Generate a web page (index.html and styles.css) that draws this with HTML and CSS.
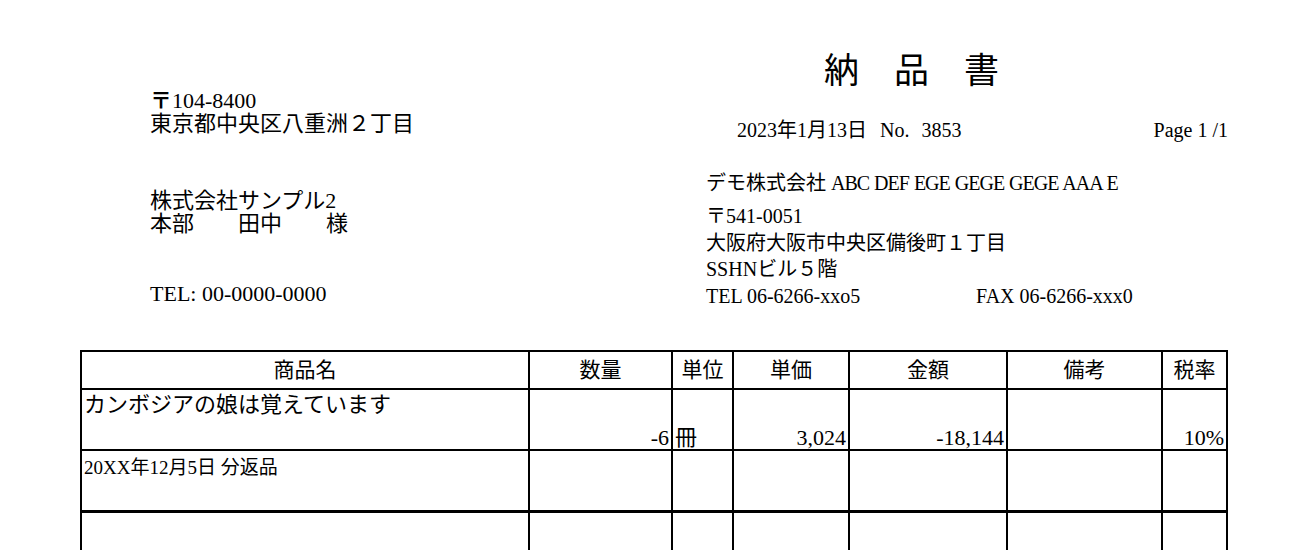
FILE: index.html
```html
<!DOCTYPE html>
<html lang="ja">
<head>
<meta charset="utf-8">
<title>納品書</title>
<link rel="stylesheet" href="styles.css">
</head>
<body>
<div class="sheet">
  <div class="header">
    <div class="customer">
      <div class="line"><span class="postmark">〒</span>104-8400</div>
      <div class="line">東京都中央区八重洲２丁目</div>
      <div class="line gap-name">株式会社サンプル2</div>
      <div class="line">本部　　田中　　様</div>
      <div class="line gap-tel">TEL: 00-0000-0000</div>
    </div>
    <div class="issuer">
      <div class="title">納　品　書</div>
      <div class="meta">
        <span class="date">2023年1月13日</span>
        <span class="no">No.</span>
        <span class="num">3853</span>
        <span class="page">Page 1 /1</span>
      </div>
      <div class="company">デモ株式会社 <span class="latin">ABC DEF EGE GEGE GEGE AAA E</span></div>
      <div class="address">
        <div>〒541-0051</div>
        <div>大阪府大阪市中央区備後町１丁目</div>
        <div>SSHNビル５階</div>
        <div class="contact"><span class="tel">TEL 06-6266-xxo5</span><span>FAX 06-6266-xxx0</span></div>
      </div>
    </div>
  </div>

  <table class="items">
    <colgroup>
      <col class="c-name"><col class="c-qty"><col class="c-unit"><col class="c-price"><col class="c-amount"><col class="c-note"><col class="c-tax">
    </colgroup>
    <thead>
      <tr class="head">
        <th>商品名</th><th>数量</th><th>単位</th><th>単価</th><th>金額</th><th>備考</th><th>税率</th>
      </tr>
    </thead>
    <tbody>
      <tr class="item">
        <td class="name">カンボジアの娘は覚えています</td>
        <td class="numcell">-6</td>
        <td class="unitcell">冊</td>
        <td class="numcell">3,024</td>
        <td class="numcell">-18,144</td>
        <td></td>
        <td class="numcell">10%</td>
      </tr>
      <tr class="detail">
        <td class="name">20XX年12月5日 分返品</td>
        <td></td><td></td><td></td><td></td><td></td><td></td>
      </tr>
      <tr class="blank">
        <td></td><td></td><td></td><td></td><td></td><td></td><td></td>
      </tr>
    </tbody>
  </table>
</div>
</body>
</html>
```

FILE: styles.css
```css
html, body {
  margin: 0;
  padding: 0;
  background: #ffffff;
}

body {
  font-family: "Liberation Serif", "Noto Sans CJK JP", serif;
  color: #000000;
  overflow: hidden;
}

.sheet {
  padding: 50px 0 0 80px;
}

.header {
  display: grid;
  grid-template-columns: 556px 522px;
  margin-left: 70px;
}

.customer {
  padding-top: 39px;
  font-size: 22px;
}

.customer .line {
  line-height: 23px;
}

.postmark {
  font-weight: bold;
}

.customer .gap-name {
  margin-top: 55px;
  line-height: 22px;
}

.customer .gap-tel {
  margin-top: 47px;
}

.issuer {
  font-size: 20px;
}

.title {
  font-size: 35px;
  line-height: 44px;
  padding-left: 118px;
}

.meta {
  display: flex;
  align-items: baseline;
  margin-top: 25px;
  line-height: 22px;
}

.meta .date {
  margin-left: 31px;
  width: 143px;
}

.meta .num {
  margin-left: 12px;
}

.meta .page {
  margin-left: auto;
  white-space: pre;
}

.company {
  margin-top: 31px;
  line-height: 22px;
}

.company .latin {
  letter-spacing: -1px;
  word-spacing: 1px;
}

.address {
  margin-top: 9px;
  line-height: 26.7px;
}

.contact {
  display: flex;
}

.contact .tel {
  width: 270px;
}

.items {
  margin-top: 40px;
  border-collapse: collapse;
  table-layout: fixed;
  width: 1146px;
  font-size: 22px;
}

.c-name { width: 448px; }
.c-qty { width: 143px; }
.c-unit { width: 61px; }
.c-price { width: 116px; }
.c-amount { width: 158px; }
.c-note { width: 155px; }
.c-tax { width: 65px; }

.items th,
.items td {
  border: 2px solid #000000;
  padding: 0 2px;
  font-weight: normal;
}

.items th {
  height: 36px;
  font-size: 21px;
  text-align: center;
  vertical-align: middle;
  line-height: 24px;
}

.item td {
  height: 55px;
  vertical-align: bottom;
  line-height: 22px;
}

.item td.name {
  vertical-align: top;
  padding-top: 4px;
}

.numcell {
  text-align: right;
}

.unitcell {
  text-align: left;
}

.detail td {
  height: 53px;
  vertical-align: top;
  border-bottom-width: 3px;
}

.detail td.name {
  padding-top: 6px;
  font-size: 19px;
  line-height: 22px;
}

.blank td {
  height: 60px;
}
```
